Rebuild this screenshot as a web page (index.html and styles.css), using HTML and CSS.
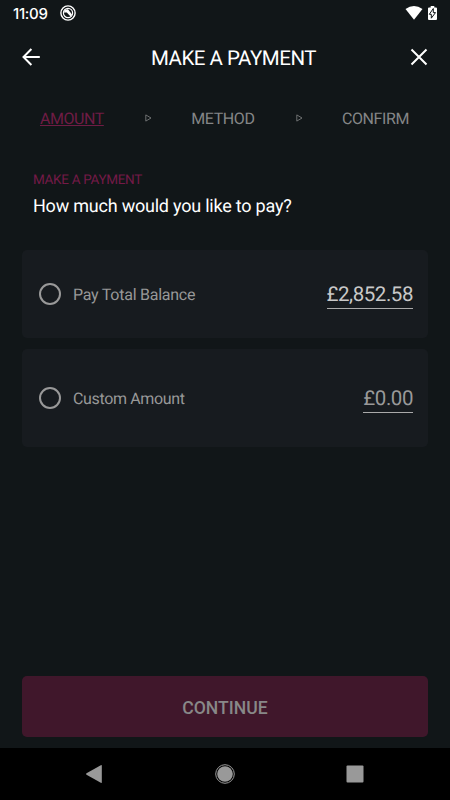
FILE: index.html
```html
<!DOCTYPE html>
<html lang="en">
<head>
<meta charset="utf-8">
<title>Make a payment</title>
<link rel="stylesheet" href="styles.css">
</head>
<body>
<div class="screen">
  <div class="status">
    <span class="clock">11:09</span>
    <svg class="notice" width="16" height="16" viewBox="0 0 16 16" fill="none"><circle cx="8" cy="8" r="7.100" stroke="#fff" stroke-width="1.400"/><circle cx="8" cy="8" r="4.600" stroke="#fff" stroke-width="1.200"/><path d="M3.800 7.500Q5 4 8 4.200L12 9.500 11 12 6.800 7.400Z" fill="#fff"/></svg>
    <svg class="wifi" width="18" height="14" viewBox="0 0 18 14"><path d="M.5 3.1Q9-3 17.500 3.100L9 13.700Z" fill="#fff"/></svg>
    <svg class="battery" width="9" height="14" viewBox="0 0 9 14"><path d="M2.700 0h3.600v1.400H8q1 0 1 1V13q0 1-1 1H1q-1 0-1-1V2.400q0-1 1-1h1.700Z" fill="#fff"/><path d="M5.300 2.500 1.300 8.300h2v3.900l4.200-5.600H5.300Z" fill="#fff" stroke="#111618" stroke-width="1"/></svg>
  </div>
  <header class="header">
    <svg width="18" height="18" viewBox="0 0 18 18" fill="none" stroke="#fff" stroke-width="2"><path d="M9.400 1 1.500 9l7.900 8M1.500 9h16.300"/></svg>
    <h1 class="title">MAKE A PAYMENT</h1>
    <svg width="18" height="18" viewBox="0 0 18 18" fill="none" stroke="#fff" stroke-width="2"><path d="m1.500 1.500 15 15m0-15-15 15"/></svg>
  </header>
  <nav class="steps">
    <span class="step active">AMOUNT</span>
    <svg class="arrow" width="7" height="8" viewBox="0 0 7 8" fill="none" stroke="#858687" stroke-width=".8"><path d="M.8.9v6.200L6 4Z"/></svg>
    <span class="step">METHOD</span>
    <svg class="arrow" width="7" height="8" viewBox="0 0 7 8" fill="none" stroke="#858687" stroke-width=".8"><path d="M.8.9v6.200L6 4Z"/></svg>
    <span class="step">CONFIRM</span>
  </nav>
  <div class="intro">
    <div class="eyebrow">MAKE A PAYMENT</div>
    <h2 class="question">How much would you like to pay?</h2>
  </div>
  <main class="options">
    <div class="option total">
      <span class="radio"></span><span class="label">Pay Total Balance</span><span class="amount bright">£2,852.58</span>
    </div>
    <div class="option custom">
      <span class="radio"></span><span class="label">Custom Amount</span><span class="amount">£0.00</span>
    </div>
  </main>
  <button class="continue">CONTINUE</button>
  <footer class="system">
    <svg width="18" height="20" viewBox="0 0 18 20"><path d="M1.500 9.300 15.800 1.200q1-.5 1 .5v16.600q0 1-1 .5L1.500 10.700q-1-.7 0-1.400Z" fill="#999"/></svg>
    <svg width="20" height="20" viewBox="0 0 20 20"><circle cx="10" cy="10" r="9.300" fill="none" stroke="#999"/><circle cx="10" cy="10" r="7.800" fill="#999"/></svg>
    <svg width="18" height="18" viewBox="0 0 18 18"><rect x=".5" y=".5" width="17" height="17" rx="1" fill="#999"/></svg>
  </footer>
</div>
</body>
</html>
```
FILE: styles.css
```css
* { box-sizing: border-box; }
body { margin: 0; background: #111618; font-family: Roboto, sans-serif; text-rendering: geometricPrecision; }
svg { display: block; flex: none; }
h1, h2 { margin: 0; font-weight: 400; }
.screen { width: 450px; height: 800px; display: flex; flex-direction: column; color: #fff; white-space: nowrap; }
.status { height: 28px; display: flex; align-items: center; padding: 0 13px; flex: none; }
.clock { font: 500 15px/28px Inter, sans-serif; letter-spacing: -.3px; width: 47px; }
.notice { margin-top: -2px; }
.wifi { margin: -2px 5px 0 auto; }
.battery { margin-top: -2px; }
.header { height: 58px; flex: none; display: flex; align-items: center; justify-content: space-between; padding: 0 22px; }
.title { font-size: 20.5px; line-height: 24px; letter-spacing: -.5px; margin: 3px 0 0 17px; }
.steps { height: 64px; flex: none; display: flex; align-items: center; justify-content: space-between; padding: 0 41px 0 40px; }
.step { font-size: 16px; line-height: 20px; letter-spacing: -.4px; color: #858687; margin-top: 1px; }
.arrow { margin: -1px -1px 0 1px; }
.active { color: #6f1c45; text-decoration: underline; letter-spacing: -.45px; }
.intro { height: 99px; flex: none; padding: 21px 33px 0; }
.eyebrow { font-size: 13.5px; line-height: 18px; letter-spacing: -.3px; color: #741a47; }
.question { font-size: 18px; line-height: 24px; letter-spacing: -.22px; margin-top: 6px; }
.options { display: flex; flex-direction: column; gap: 11px; padding: 1px 22px 0; }
.option { border-radius: 5px; background: #171b1f; display: flex; align-items: center; padding: 0 15px 0 17px; }
.total { height: 88px; }
.custom { height: 98px; }
.radio { width: 22px; height: 22px; border: 2px solid #999; border-radius: 50%; margin-right: 12px; }
.label { font-size: 16px; letter-spacing: -.25px; color: #989898; margin-top: 1px; }
.custom .label { letter-spacing: -.35px; }
.amount { margin-left: auto; font-size: 20.5px; line-height: 24px; letter-spacing: -.45px; padding-bottom: 1px; margin-top: 3px; border-bottom: 1px solid #aaa; color: #999; }
.bright { color: #c8c8c8; }
.continue { margin: auto 22px 11px; height: 61px; flex: none; border: 0; border-radius: 5px; background: #40172b; color: #888; font: 500 17.6px/24px Roboto, sans-serif; padding: 2px 0 0; }
.system { height: 52px; flex: none; background: #000; display: flex; justify-content: space-between; align-items: center; padding: 0 86px 0 85px; }
```
